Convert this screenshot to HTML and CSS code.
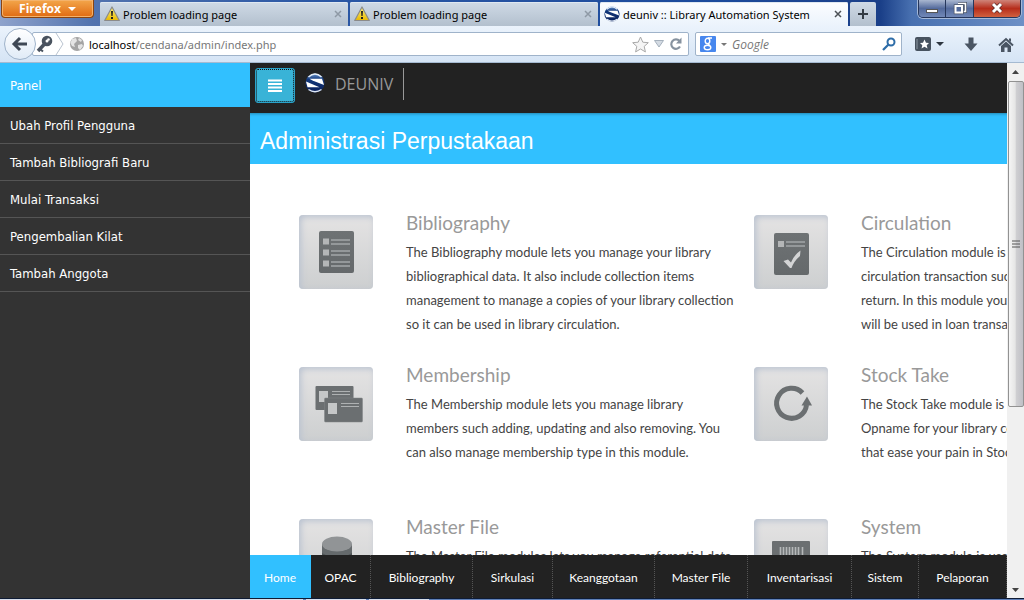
FILE: index.html
```html
<!DOCTYPE html>
<html lang="id">
<head>
<meta charset="utf-8">
<title>deuniv :: Library Automation System</title>
<link rel="stylesheet" href="styles.css">
</head>
<body>
<svg class="defs" width="0" height="0" aria-hidden="true">
  <defs>
    <linearGradient id="warnFill" x1="0" y1="0" x2="0" y2="1"><stop offset="0" stop-color="#fff27a"/><stop offset="1" stop-color="#e8b800"/></linearGradient>
    <linearGradient id="ballFill" x1="0" y1="0" x2="0" y2="1"><stop offset="0" stop-color="#6f9bd2"/><stop offset=".3" stop-color="#12387c"/><stop offset="1" stop-color="#0a1f5a"/></linearGradient>
    <linearGradient id="sheetFill" x1="0" y1="0" x2="0" y2="1"><stop offset="0" stop-color="#6e7274"/><stop offset="1" stop-color="#65696b"/></linearGradient>
    <symbol id="warn" viewBox="0 0 16 16"><path d="M8 1 15.300 14.500H.7Z" fill="url(#warnFill)" stroke="#8b8b8b" stroke-width="1.200" stroke-linejoin="round"/><path d="M7 5h2l-.4 5H7.400Z" fill="#222"/><rect x="7" y="11" width="2" height="2" fill="#222"/></symbol>
    <symbol id="ball" viewBox="0 0 20 20"><circle cx="10" cy="10" r="9.500" fill="url(#ballFill)"/><path d="M3.500 4Q10-2 16.500 4" stroke="#e6eef8" stroke-width="1.500" fill="none"/><path d="M4.500 5.800H17L19 12 7.500 7.500Z" fill="#fff"/><path d="M1 8.500 14.500 14.200H2.500Z" fill="#fff"/><path d="M3.500 16.500Q10 21 16.500 16.500" stroke="#dfe8f4" stroke-width="1.500" fill="none"/></symbol>
  </defs>
</svg>
<div class="window">
  <header class="titlebar">
    <button class="firefox" type="button">Firefox <span class="caret caret-white"></span></button>
    <nav class="tabs" aria-label="Tabs">
      <div class="tab"><svg width="16" height="16"><use href="#warn"/></svg><span class="tab-title">Problem loading page</span><button class="tab-close" type="button" aria-label="Close tab"><svg width="8" height="8"><path d="M1 1 7 7M7 1 1 7" stroke="currentColor" stroke-width="1.500"/></svg></button></div>
      <div class="tab"><svg width="16" height="16"><use href="#warn"/></svg><span class="tab-title">Problem loading page</span><button class="tab-close" type="button" aria-label="Close tab"><svg width="8" height="8"><path d="M1 1 7 7M7 1 1 7" stroke="currentColor" stroke-width="1.500"/></svg></button></div>
      <div class="tab tab-active"><svg width="16" height="16"><use href="#ball"/></svg><span class="tab-title">deuniv :: Library Automation System</span><button class="tab-close" type="button" aria-label="Close tab"><svg width="8" height="8"><path d="M1 1 7 7M7 1 1 7" stroke="currentColor" stroke-width="1.500"/></svg></button></div>
      <button class="tab-new" type="button" aria-label="New tab"><svg width="12" height="12"><path d="M6 1V11M1 6H11" stroke="#333b44" stroke-width="2"/></svg></button>
    </nav>
    <div class="controls">
      <button class="control" type="button" aria-label="Minimize"><svg width="14" height="14"><rect x="1.500" y="7.500" width="11" height="3" fill="#fff" stroke="#555"/></svg></button>
      <button class="control" type="button" aria-label="Restore"><svg width="14" height="14"><path d="M5 1.500h7.500v8H10" fill="none" stroke="#4c5668" stroke-width="3"/><path d="M5 1.500h7.500v8H10" fill="none" stroke="#fff" stroke-width="1.500"/><rect x="2.500" y="4" width="6.500" height="6.500" fill="#526a9b" stroke="#4c5668" stroke-width="3.500"/><rect x="2.500" y="4" width="6.500" height="6.500" fill="#526a9b" stroke="#fff" stroke-width="2"/></svg></button>
      <button class="control control-close" type="button" aria-label="Close"><svg width="14" height="14"><path d="M3 2 11 10M11 2 3 10" stroke="#5a2a2a" stroke-width="4.500"/><path d="M3 2 11 10M11 2 3 10" stroke="#fff" stroke-width="3"/></svg></button>
    </div>
  </header>

  <div class="toolbar">
    <button class="back" type="button" aria-label="Back"><svg width="18" height="16"><path d="M9 2 3 8 9 14M3 8H16" fill="none" stroke="#3f4855" stroke-width="3"/></svg></button>
    <div class="urlbar">
      <svg width="29" height="22"><circle cx="12" cy="8" r="3.400" fill="none" stroke="#4a535f" stroke-width="3.800"/><path d="M10 10.500 3 18" stroke="#4a535f" stroke-width="3.500"/><path d="M5 16 8 18.500" stroke="#4a535f" stroke-width="2"/><circle cx="13.500" cy="6.500" r="1.300" fill="#fff"/><path d="M21 0 28 11 21 22" fill="none" stroke="#b9c3cf"/></svg>
      <svg width="16" height="16"><circle cx="8" cy="8" r="7" fill="#a4a4a4"/><path d="M3 3 7 2 8 5 5 8 6 11 3 10 1.500 7ZM9 9 13 8 14 10 11 14 9 12ZM10 2 13 4 12 6 9 4Z" fill="#e4e4e4"/></svg>
      <a class="address" href="#"><b>localhost</b>/cendana/admin/index.php</a>
      <svg width="17" height="17"><path d="M8.500 1 10.800 6.200 16.300 6.700 12.200 10.400 13.400 15.900 8.500 13 3.600 15.900 4.800 10.400 .7 6.700 6.200 6.200Z" fill="#f5f5f5" stroke="#a9a9a9"/></svg>
      <svg width="10" height="8"><path d="M.5.5H9.500L5 7Z" fill="#d4dbe3" stroke="#a5b0bc"/></svg>
      <svg width="14" height="14"><path d="M10.500 4A4.700 4.700 0 1 0 11 9.500" fill="none" stroke="#86929f" stroke-width="2.200"/><path d="M12.500.5V6.500H7Z" fill="#86929f"/></svg>
    </div>
    <label class="search">
      <svg width="16" height="16"><rect width="16" height="16" rx="1" fill="#4787ee"/><ellipse cx="7.500" cy="5" rx="2.300" ry="2.700" fill="none" stroke="#fff" stroke-width="1.400"/><ellipse cx="7.500" cy="11.500" rx="3.300" ry="2.200" fill="none" stroke="#fff" stroke-width="1.400"/><path d="M8 2H12M8 7.500 9.500 9.500" stroke="#fff" stroke-width="1.300"/></svg>
      <span class="caret caret-small"></span>
      <input class="search-input" type="text" placeholder="Google" aria-label="Search">
      <svg width="14" height="14"><circle cx="9" cy="5" r="3.500" fill="none" stroke="#2e6da8" stroke-width="2"/><path d="M6.500 7.500 1 13" stroke="#2e6da8" stroke-width="2.300"/></svg>
    </label>
    <button class="tool tool-first" type="button" aria-label="Bookmarks"><svg width="16" height="14"><rect width="16" height="14" rx="2" fill="#47525f"/><path d="M2 2V12" stroke="#8c97a3"/><path d="M9.500 2.500 11 5.800 14 6 11.700 8.300 12.500 11.500 9.500 9.700 6.500 11.500 7.300 8.300 5 6 8 5.800Z" fill="#fff"/></svg><span class="caret"></span></button>
    <button class="tool" type="button" aria-label="Downloads"><svg width="14" height="15"><path d="M4.500.5H9.500V6.500H13.500L7 14 .5 6.500H4.500Z" fill="#4a5563"/></svg></button>
    <button class="tool" type="button" aria-label="Home page"><svg width="16" height="15"><path d="M1 8.500 8 2 15 8.500" fill="none" stroke="#4a5563" stroke-width="2"/><path d="M3 9 8 4.500 13 9V15H9.500V10.500H6.500V15H3ZM11 1.500H13V5L11 3.500Z" fill="#4a5563"/></svg></button>
  </div>

  <div class="viewport">
    <aside class="sidebar">
      <h2 class="side-title">Panel</h2>
      <nav class="side-nav">
        <a href="#">Ubah Profil Pengguna</a>
        <a href="#">Tambah Bibliografi Baru</a>
        <a href="#">Mulai Transaksi</a>
        <a href="#">Pengembalian Kilat</a>
        <a href="#">Tambah Anggota</a>
      </nav>
    </aside>
    <main class="page">
      <div class="topbar">
        <button class="menu" type="button" aria-label="Menu"><svg width="14" height="13"><path d="M0 1.500H14M0 5H14M0 8.500H14M0 12H14" stroke="#fff" stroke-width="2.200"/></svg></button>
        <svg class="brand-logo" width="20" height="20"><use href="#ball"/></svg>
        <a class="brand" href="#">DEUNIV</a>
      </div>
      <h1 class="page-title">Administrasi Perpustakaan</h1>
      <div class="scroll">
        <div class="modules">
          <article class="module">
            <div class="tile"><svg width="74" height="74"><rect x="20" y="16" width="35" height="42" rx="2" fill="url(#sheetFill)"/><path d="M24 23.500h6v6h-6zM24 34.500h6v6h-6zM24 45.500h6v6h-6z" fill="#b4b6b7"/><path d="M32 25H51M32 29H51M32 36H51M32 40H51M32 47H51M32 51H51" stroke="#94989a" stroke-width="2"/></svg></div>
            <div><h3>Bibliography</h3><p>The Bibliography module lets you manage your library<br>bibliographical data. It also include collection items<br>management to manage a copies of your library collection<br>so it can be used in library circulation.</p></div>
          </article>
          <article class="module">
            <div class="tile"><svg width="74" height="74"><rect x="20" y="18" width="35" height="42" rx="2" fill="url(#sheetFill)"/><rect x="24" y="26" width="6" height="6" fill="#b4b6b7"/><path d="M32 27H51M32 31H51" stroke="#94989a" stroke-width="2"/><path d="M29.500 46 34 44.500 37 47.500Q40 40 46.500 35.500L46 41Q40 46 37.500 53H36Z" fill="#d3d4d5"/></svg></div>
            <div><h3>Circulation</h3><p>The Circulation module is used for doing library<br>circulation transaction such as collection loan and<br>return. In this module you can also create loan rules<br>will be used in loan transaction process.</p></div>
          </article>
          <article class="module">
            <div class="tile"><svg width="74" height="74"><rect x="16.500" y="19" width="38" height="24" rx="1" fill="#6b6f71"/><rect x="20" y="24" width="9" height="11" fill="#c5c7c8"/><path d="M33 24.500H51M33 27.500H51" stroke="#aeb1b2"/><rect x="25.500" y="31" width="38" height="24" rx="1" fill="#6b6f71" stroke="#818587" stroke-width=".5"/><rect x="29" y="36" width="9" height="11" fill="#c5c7c8"/><path d="M42 36.500H60M42 39.500H60" stroke="#aeb1b2"/></svg></div>
            <div><h3>Membership</h3><p>The Membership module lets you manage library<br>members such adding, updating and also removing. You<br>can also manage membership type in this module.</p></div>
          </article>
          <article class="module">
            <div class="tile"><svg width="74" height="74"><path d="M48.500 26A15 15 0 1 0 52.500 38" fill="none" stroke="#6b6f71" stroke-width="5"/><path d="M53 29.500 58 38.500H47.500Z" fill="#6b6f71"/></svg></div>
            <div><h3>Stock Take</h3><p>The Stock Take module is the easy way to do Stock<br>Opname for your library collections. Follow several steps<br>that ease your pain in Stock Opname proccess.</p></div>
          </article>
          <article class="module">
            <div class="tile"><svg width="74" height="74"><path d="M23 25V55H53V25Z" fill="#656a6c"/><path d="M23 34Q38 43 53 34V38Q38 47 23 38Z" fill="#4f5456"/><ellipse cx="38" cy="25" rx="15" ry="7.500" fill="#919496"/></svg></div>
            <div><h3>Master File</h3><p>The Master File modules lets you manage referential data<br>that will be used by another modules.</p></div>
          </article>
          <article class="module">
            <div class="tile"><svg width="74" height="74"><rect x="18" y="22" width="38" height="36" rx="1" fill="#6b6f71"/><path d="M26.500 28V50M29.500 28V50M32.500 28V50M35.500 28V50M38.500 28V50M41.500 28V50M44.500 28V50M48.500 28V50" stroke="#b5b8b9" stroke-width="1.600"/></svg></div>
            <div><h3>System</h3><p>The System module is used to configure application<br>globally, manage users and create backup.</p></div>
          </article>
        </div>
      </div>
      <nav class="footer-nav">
        <a class="current" href="#">Home</a><a href="#">OPAC</a><a href="#">Bibliography</a><a href="#">Sirkulasi</a><a href="#">Keanggotaan</a><a href="#">Master File</a><a href="#">Inventarisasi</a><a href="#">Sistem</a><a href="#">Pelaporan</a>
      </nav>
    </main>
    <div class="scrollbar" aria-hidden="true">
      <span class="arrow"><svg width="7" height="4"><path d="M0 4 3.500 0 7 4Z" fill="#444"/></svg></span>
      <div class="track"><div class="thumb"><svg width="8" height="8"><path d="M0 1H8M0 4H8M0 7H8" stroke="#555"/></svg></div></div>
      <span class="arrow"><svg width="7" height="4"><path d="M0 0 3.500 4 7 0Z" fill="#444"/></svg></span>
    </div>
  </div>
  <div class="taskbar" aria-hidden="true"><span></span><span></span><span></span></div>
</div>
</body>
</html>
```

FILE: styles.css
```css
* { box-sizing: border-box; }
body { margin: 0; font: 11px/16px "Noto Sans", "Open Sans", sans-serif; color: #000; }
button { margin: 0; padding: 0; border: 0; background: none; font: inherit; color: inherit; }
a { color: inherit; text-decoration: none; }
h1, h2, h3, p { margin: 0; font-weight: normal; }
svg { display: block; flex: none; }
.defs { position: absolute; }
.window { display: flex; flex-direction: column; height: 100vh; overflow: hidden; }

.titlebar { display: flex; height: 26px; padding: 0 3px 0 1px; background: linear-gradient(90deg, #8fa3cc 0, #5273ae 9%, #2b58a5 30%, #1d4b9c 70%, #1a3f88 86%, #4870b0 89%, #6d90c6 100%); }
.firefox { display: flex; align-items: center; justify-content: center; gap: 7px; width: 93px; height: 18px; border: 1px solid #8a4411; border-top: 0; border-radius: 0 0 4px 4px; background: linear-gradient(#f3a64b, #e06b12); box-shadow: inset 0 0 0 1px #f4b26a; color: #fff; font: bold 12px/16px "Open Sans", sans-serif; }
.caret { width: 0; border: 4px solid transparent; border-top-color: #2d3540; border-bottom: 0; }
.caret-white { border-top-color: #fff; }
.caret-small { border-width: 3px; border-bottom: 0; border-top-color: #777; }
.tabs { display: flex; gap: 2px; flex: 0 1 776px; min-width: 0; margin: 2px 0 0 6px; }
.tab { display: flex; align-items: center; flex: 1 1 0; min-width: 0; gap: 3px; padding: 0 6px 0 4px; border-radius: 2px 2px 0 0; background: linear-gradient(#cfdae6, #b3c0ce); box-shadow: inset 0 1px #dfe8f1; }
.tab-title { flex: 1; padding-top: 1px; white-space: nowrap; overflow: hidden; }
.tab-close { color: #8e99a5; }
.tab-active { background: linear-gradient(#fcfdff, #ebf3fc); }
.tab-active .tab-close { color: #4d5257; }
.tab-new { display: grid; place-items: center; width: 26px; border-radius: 2px 2px 0 0; background: linear-gradient(#cfdae6, #b3c0ce); }
.controls { display: flex; width: 103px; height: 18px; margin-left: auto; border: 1px solid #26375c; border-top: 0; border-radius: 0 0 5px 5px; overflow: hidden; box-shadow: 0 0 0 1px #a4b8d8; }
.control { display: grid; place-items: center; flex: 1 1 28px; border-right: 1px solid #26375c; background: linear-gradient(#a9b7d0, #536a9c 50%, #7188b8); }
.control-close { flex-basis: 47px; border: 0; background: linear-gradient(#cf8479, #b62d1b 50%, #d1613f); }

.toolbar { display: flex; align-items: center; height: 37px; padding: 0 10px 0 4px; border-bottom: 1px solid #a5bad1; background: linear-gradient(#ebf3fc, #d5e4f5); }
.back { display: grid; place-items: center; flex: none; width: 32px; height: 32px; border: 1px solid #9fb3ca; border-radius: 50%; background: linear-gradient(#fff, #e0ebf7); z-index: 1; }
.urlbar { display: flex; align-items: center; gap: 5px; flex: 1; min-width: 0; height: 24px; margin-left: -4px; padding: 0 5px 0 2px; border: 1px solid #9fb3ca; border-radius: 2px; background: #fff; }
.address { flex: 1; padding-top: 1px; margin-left: -1px; color: #777; white-space: nowrap; overflow: hidden; }
.address b { font-weight: normal; color: #000; }
.search { display: flex; align-items: center; gap: 5px; flex: 0 1 207px; min-width: 0; height: 24px; margin-left: 6px; padding: 0 5px 0 4px; border: 1px solid #9fb3ca; border-radius: 2px; background: #fff; }
.search-input { flex: 1; min-width: 0; padding: 1px 0 0; border: 0; outline: 0; background: none; font: italic 12px/16px "Open Sans", sans-serif; }
.search-input::placeholder { color: #777; opacity: 1; }
.tool { display: flex; align-items: center; gap: 5px; margin-left: 20px; }
.tool-first { margin-left: 13px; }

.viewport { display: flex; flex: 1; min-height: 0; }
.sidebar { flex: 0 0 250px; background: #333; color: #fff; font: 13px/16px "DejaVu Sans Condensed", "DejaVu Sans", sans-serif; font-stretch: condensed; }
.side-title { padding: 15px 10px 13px; background: #31c0ff; font-size: 13px; line-height: 16px; }
.side-nav { display: flex; flex-direction: column; }
.side-nav a { padding: 11px 10px 9px; border-bottom: 1px solid #555; }
.page { display: flex; flex-direction: column; flex: 1; min-width: 0; }
.topbar { display: flex; align-items: flex-start; height: 50px; padding: 5px; background: #222; }
.menu { display: grid; place-items: center; width: 40px; height: 35px; border: 1px solid #2aa3ca; border-radius: 3px; background: #39b3d7; outline: 1px dotted #111; outline-offset: -2px; }
.brand-logo { margin: 5px 0 0 10px; }
.brand { margin-left: 10px; padding: 6px 10px 6px 0; border-right: 1px solid #999; color: #999; font: 16px/20px "Open Sans", sans-serif; }
.page-title { padding: 15px 10px 10px; background: #31c0ff; box-shadow: inset 0 3px 3px -2px #2385af; color: #fff; font: 23px/26px "Liberation Sans", Arial, sans-serif; }
.scroll { flex: 1; min-height: 0; overflow: hidden; background: #fff; }
.modules { display: grid; grid-template-columns: 1fr 1fr; grid-auto-rows: 152px; width: calc(100% + 250px); padding: 51px 48px 0 49px; font-family: Lato, sans-serif; }
.module { display: flex; gap: 33px; min-width: 0; white-space: nowrap; }
.tile { flex: none; width: 74px; height: 74px; border-radius: 4px; background: linear-gradient(#e4e3e3, #cdcfd0); box-shadow: inset 2px 2px 6px #b9c2d0; }
.module h3 { color: #999; font-size: 19px; line-height: 16px; }
.module p { margin-top: 9px; color: #444; font-size: 13px; line-height: 24px; }
.footer-nav { display: grid; grid-template-columns: 61fr 60fr 102fr 80fr 102fr 93fr 104fr 67fr 88fr; height: 43px; background: #222; color: #fff; font: 12px/16px Lato, sans-serif; }
.footer-nav a { display: grid; place-items: center; padding-top: 3px; border-right: 1px dotted #555; white-space: nowrap; }
.footer-nav .current { border-right-color: #31c0ff; background: #31c0ff; }

.scrollbar { display: flex; flex-direction: column; flex: 0 0 17px; background: #f0f0f0; }
.arrow { display: grid; place-items: center; height: 17px; }
.track { flex: 1; }
.thumb { display: grid; place-items: center; height: 65%; margin: 1px 0 0 1px; border: 1px solid #929292; border-radius: 2px; background: linear-gradient(90deg, #f5f5f5, #e5e5e5 45%, #cfcfd2 50%, #c0c0c6); }
.taskbar { display: flex; gap: 3px; height: 2px; border-top: 1px solid #0e1b33; background: #5f80b8; }
.taskbar span { width: 60px; background: #d8dfec; }
.taskbar span:first-child { width: 303px; }
```
